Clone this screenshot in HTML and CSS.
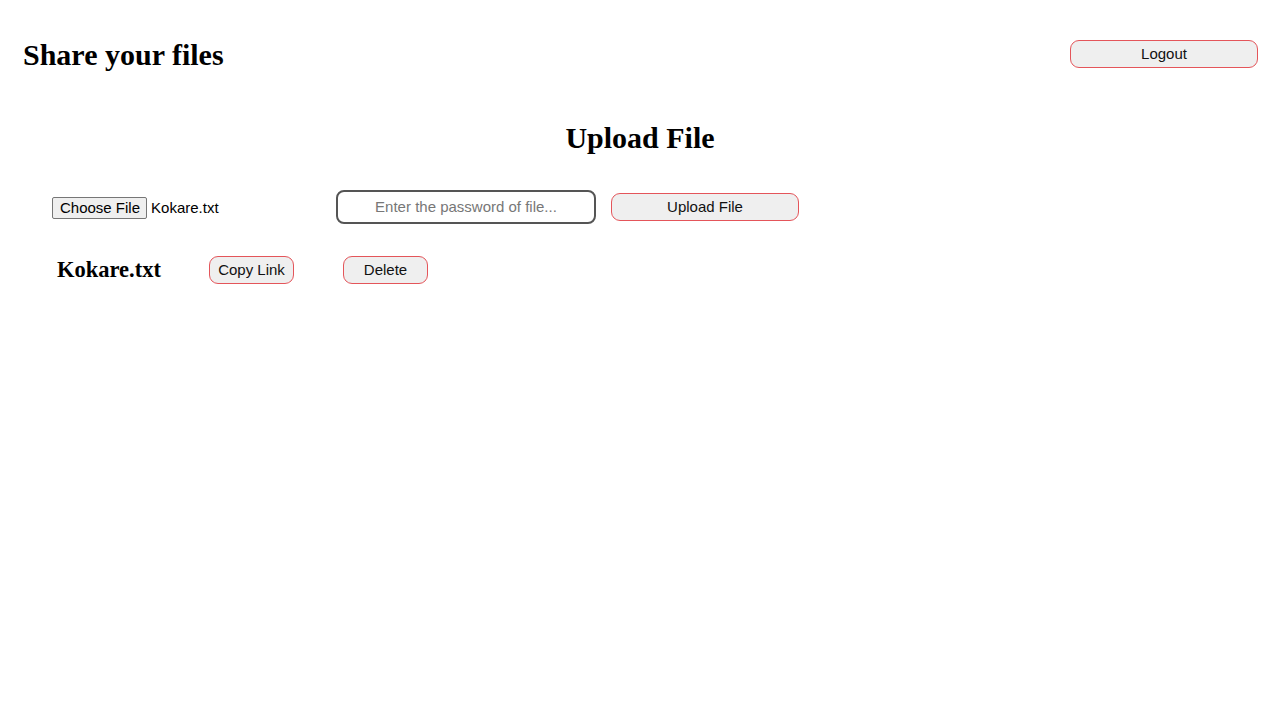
FILE: index.html
```html
<!DOCTYPE html>
<html lang="en">
<head>
<meta charset="utf-8">
<title>Share your files</title>
<link rel="stylesheet" href="styles.css">
</head>
<body>
<header class="topbar">
  <h1 class="brand">Share your files</h1>
  <button class="btn btn-wide btn-logout">Logout</button>
</header>
<main>
  <h2 class="section-title">Upload File</h2>
  <div class="upload-row">
    <div class="file-picker">
      <span class="file-btn">Choose File</span>
      <span class="file-name">Kokare.txt</span>
    </div>
    <input class="password" type="password" placeholder="Enter the password of file...">
    <button class="btn btn-wide">Upload File</button>
  </div>
  <ul class="file-list">
    <li class="file-item">
      <span class="item-name">Kokare.txt</span>
      <button class="btn btn-small">Copy Link</button>
      <button class="btn btn-small">Delete</button>
    </li>
  </ul>
</main>
</body>
</html>
```

FILE: styles.css
```css
html, body {
  margin: 0;
  padding: 0;
  background: #fff;
}
body {
  font-family: "Liberation Serif", "Times New Roman", serif;
  color: #000;
}
.topbar {
  display: flex;
  justify-content: space-between;
  align-items: flex-start;
  padding: 38px 22px 0 23px;
}
.brand {
  margin: 0;
  font-size: 30px;
  font-weight: bold;
  line-height: 34px;
}
.btn-logout {
  margin-top: 2px;
}
.btn {
  font-family: "Liberation Sans", Arial, sans-serif;
  font-size: 15px;
  color: #111;
  background: #efefef;
  border: 1px solid #e4555a;
  border-radius: 9px;
  height: 28px;
  padding: 0 0 2px 0;
  box-sizing: border-box;
}
.btn-wide {
  width: 188px;
}
.btn-small {
  width: 85px;
}
.section-title {
  margin: 49px 0 0 0;
  text-align: center;
  font-size: 30px;
  font-weight: bold;
  line-height: 34px;
}
.upload-row {
  display: flex;
  align-items: center;
  margin-top: 35px;
  padding-left: 52px;
}
.file-picker {
  width: 284px;
  display: flex;
  align-items: center;
  font-family: "Liberation Sans", Arial, sans-serif;
  font-size: 15px;
}
.file-btn {
  display: inline-block;
  background: #efefef;
  border: 1px solid #767676;
  border-radius: 2px;
  padding: 1px 6px 1px 7px;
  line-height: 18px;
  color: #000;
  margin-top: 1px;
}
.file-name {
  margin-left: 4px;
  color: #000;
}
.password {
  width: 260px;
  height: 34px;
  box-sizing: border-box;
  border: 2px solid #555;
  border-radius: 8px;
  font-family: "Liberation Sans", Arial, sans-serif;
  font-size: 15px;
  text-align: center;
  outline: none;
  margin-right: 15px;
  padding-bottom: 2px;
}
.password::placeholder {
  color: #777;
}
.file-list {
  list-style: none;
  margin: 32px 0 0 0;
  padding: 0 0 0 57px;
}
.file-item {
  display: flex;
  align-items: center;
  gap: 49px;
}
.item-name {
  font-size: 22.5px;
  font-weight: bold;
  width: 103px;
}
```
